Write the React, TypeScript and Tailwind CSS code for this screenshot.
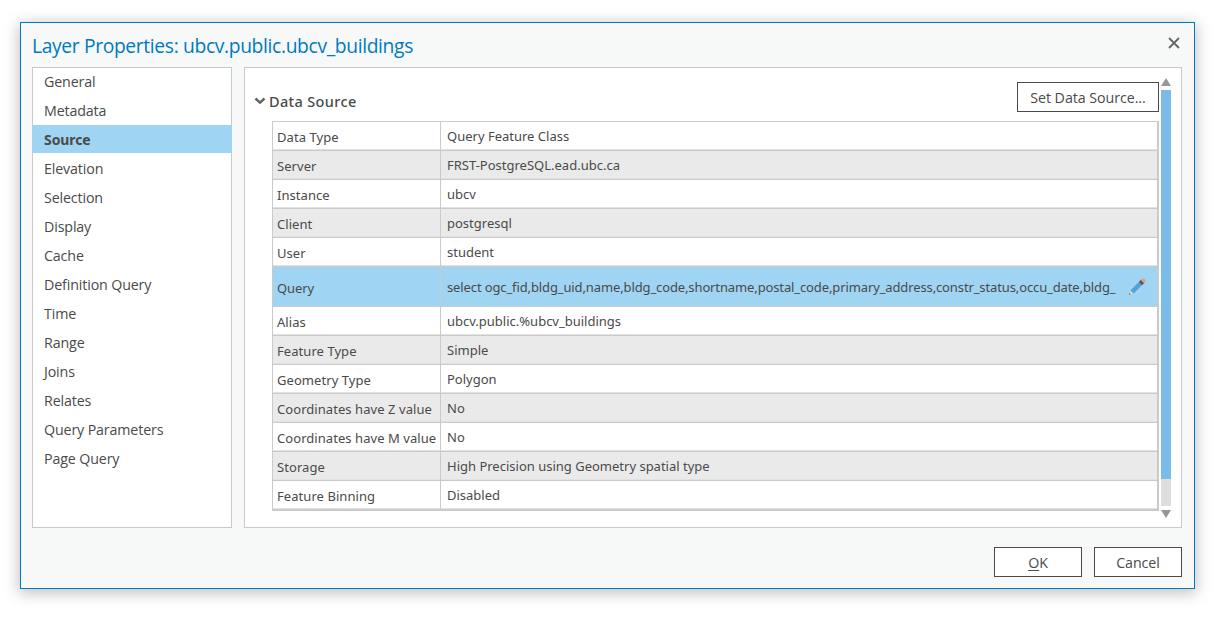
import React from "react";

const sections = [
  "General", "Metadata", "Source", "Elevation", "Selection", "Display", "Cache",
  "Definition Query", "Time", "Range", "Joins", "Relates", "Query Parameters", "Page Query",
];

const rows: [string, string][] = [
  ["Data Type", "Query Feature Class"],
  ["Server", "FRST-PostgreSQL.ead.ubc.ca"],
  ["Instance", "ubcv"],
  ["Client", "postgresql"],
  ["User", "student"],
  ["Query", "select ogc_fid,bldg_uid,name,bldg_code,shortname,postal_code,primary_address,constr_status,occu_date,bldg_"],
  ["Alias", "ubcv.public.%ubcv_buildings"],
  ["Feature Type", "Simple"],
  ["Geometry Type", "Polygon"],
  ["Coordinates have Z value", "No"],
  ["Coordinates have M value", "No"],
  ["Storage", "High Precision using Geometry spatial type"],
  ["Feature Binning", "Disabled"],
];

function PencilIcon() {
  return (
    <svg width="18" height="18" viewBox="0 0 18 18" className="mb-0.5 shrink-0">
      <path d="M1 16.6 2.6 12.6 5.4 15.4Z" fill="#f3d9b5" />
      <path d="M.8 16.8 1.6 15 2.6 16Z" fill="#4a4a4a" />
      <path d="M2.4 12.4 10.8 4 14 7.2 5.6 15.6Z" fill="#4fa3dc" />
      <path d="M10.8 4 13 1.8 16.2 5 14 7.2Z" fill="#5a5555" />
      <path d="M12.8 2 14 .8Q15.6.2 16.8 1.3 17.9 2.8 17.2 4L16 5.2Z" fill="#dc9a90" />
    </svg>
  );
}

function SectionList() {
  return (
    <nav className="flex w-[200px] flex-col border border-[#cacaca] bg-white">
      {sections.map((name) => (
        <div
          key={name}
          className={
            name === "Source"
              ? "-mx-px mb-px flex h-7 items-center bg-[#9fd5f3] pl-3 text-[14px] font-bold tracking-[-0.08px]"
              : "flex h-[29px] shrink-0 items-center pl-[11px] font-['Open_Sans','Noto_Sans',sans-serif] text-[14.25px] tracking-[-0.14px] first:h-[28px] first:pb-px"
          }
        >
          {name}
        </div>
      ))}
    </nav>
  );
}

function PropertyRow({ label, value, index }: { label: string; value: string; index: number }) {
  const query = label === "Query";
  const tone = query
    ? "h-10 bg-[#9fd5f3] tracking-[-0.12px]"
    : index % 2
      ? "h-[29px] bg-[#eaeaea]"
      : "h-[29px] bg-white";
  return (
    <div className={`flex shrink-0 border-b border-[#cacaca] text-[13px] whitespace-nowrap ${tone}`}>
      <div className={`flex w-[168px] shrink-0 items-center border-r border-[#cacaca] pl-1 ${query ? "pt-1" : "pt-[3px] tracking-[0.06px] shadow-[inset_0_-1px_0_#e2e2e2]"}`}>
        {label}
      </div>
      <div className={`flex min-w-0 grow items-center pr-[11px] pl-1.5 ${query ? "pt-0.5" : "pt-px shadow-[inset_0_-1px_0_#e2e2e2]"}`}>
        <span className="grow">{value}</span>
        {query && <PencilIcon />}
      </div>
    </div>
  );
}

function ScrollBar() {
  return (
    <div className="ml-0.5 flex w-2.5 flex-col">
      <svg width="10" height="8" viewBox="0 0 10 8" className="mt-2.5"><path d="M5 0 10 8H0Z" fill="#969696" /></svg>
      <div className="mt-1 h-[416px] bg-[#dedede]">
        <div className="h-[389px] bg-[#78bce7]" />
      </div>
      <svg width="10" height="8" viewBox="0 0 10 8" className="mt-1"><path d="M0 0H10L5 8Z" fill="#969696" /></svg>
    </div>
  );
}

const buttonClass =
  "h-[30px] border border-[#4a4a4a] bg-white pt-px font-['Open_Sans','Noto_Sans',sans-serif] text-[14.25px] tracking-[-0.06px]";

export default function App() {
  return (
    <main className="h-[622px] w-[1223px] overflow-hidden bg-white pt-[22px] pl-5 font-['Noto_Sans','Open_Sans',sans-serif] text-[#4a4a4a]">
      <section className="flex h-[567px] w-[1175px] flex-col border border-[#0079c1] bg-[#f7f9f8] px-[11px] shadow-[0_3px_14px_1px_rgba(0,0,0,0.25)]">
        <header className="flex h-11 items-center justify-between">
          <h1 className="pt-0.5 font-['Open_Sans','Noto_Sans',sans-serif] text-[19.25px] tracking-[-0.35px] text-[#0079c1]">
            Layer Properties: ubcv.public.ubcv_buildings
          </h1>
          <svg width="14" height="12" viewBox="0 0 14 12" className="mt-[-4px] mr-[2px]">
            <path d="M2 1 12 11M12 1 2 11" stroke="#666" strokeWidth="1.8" />
          </svg>
        </header>
        <div className="flex h-[461px] gap-3">
          <SectionList />
          <div className="flex w-[938px] border border-[#cacaca] bg-white">
            <div className="ml-[9px] w-[905px] pt-3.5">
              <div className="flex h-[39px] justify-between">
                <h2 className="flex h-10 items-center text-[14.5px] font-medium tracking-[0.35px]">
                  <svg width="12" height="8" viewBox="0 0 12 8" className="mr-[3px] mb-0.5">
                    <path d="M1.5 1.5 6 5.6 10.5 1.5" fill="none" stroke="#666" strokeWidth="2.6" />
                  </svg>
                  Data Source
                </h2>
                <button className={`${buttonClass} w-[142px]`}>Set Data Source...</button>
              </div>
              <div className="ml-[18px] flex w-[887px] flex-col border-t border-r-2 border-b border-l border-[#cacaca]">
                {rows.map(([label, value], i) => (
                  <PropertyRow key={label} label={label} value={value} index={i} />
                ))}
              </div>
            </div>
            <ScrollBar />
          </div>
        </div>
        <footer className="mt-[19px] mr-px flex justify-end gap-3">
          <button className={`${buttonClass} w-[88px]`}>
            <span className="underline underline-offset-2">O</span>K
          </button>
          <button className={`${buttonClass} w-[88px]`}>Cancel</button>
        </footer>
      </section>
    </main>
  );
}
